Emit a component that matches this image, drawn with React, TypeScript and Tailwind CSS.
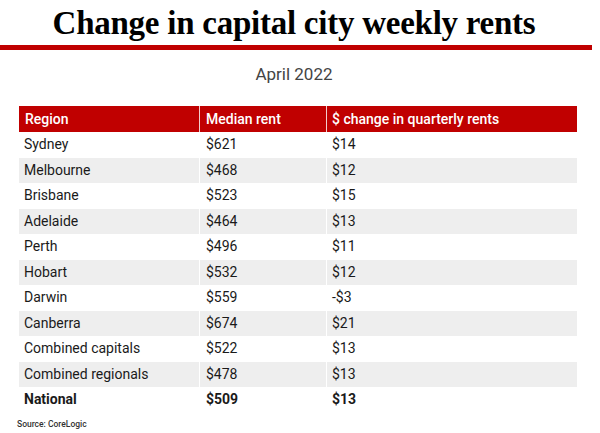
import React from 'react';

type Row = { region: string; median: string; change: string; bold?: boolean };

const rows: Row[] = [
  { region: 'Sydney', median: '$621', change: '$14' },
  { region: 'Melbourne', median: '$468', change: '$12' },
  { region: 'Brisbane', median: '$523', change: '$15' },
  { region: 'Adelaide', median: '$464', change: '$13' },
  { region: 'Perth', median: '$496', change: '$11' },
  { region: 'Hobart', median: '$532', change: '$12' },
  { region: 'Darwin', median: '$559', change: '-$3' },
  { region: 'Canberra', median: '$674', change: '$21' },
  { region: 'Combined capitals', median: '$522', change: '$13' },
  { region: 'Combined regionals', median: '$478', change: '$13' },
  { region: 'National', median: '$509', change: '$13', bold: true },
];

export default function App() {
  return (
    <div className="w-[600px] h-[433px] overflow-hidden bg-white font-['Roboto',sans-serif] text-[#1a1a1a]">
      {/* Title */}
      <h1 className="pt-[4px] pr-[12px] text-center font-['Liberation_Serif',serif] text-[33px] font-bold leading-[38px] tracking-[-0.25px] text-black">
        Change in capital city weekly rents
      </h1>
      <div className="mt-[3px] mr-[8px] h-[5px] bg-[#c00000]" />

      {/* Subtitle */}
      <div className="mt-[12px] pr-[12px] text-center text-[17px] leading-[24px] text-[#444]">April 2022</div>

      {/* Table */}
      <div className="mt-[20px] ml-[19px] w-[558px]">
        <div className="grid grid-cols-[181px_127px_250px] h-[26px] bg-[#c00000] text-[14px] font-medium text-white">
          <div className="flex items-center pl-[6px] border-r border-white/80">Region</div>
          <div className="flex items-center pl-[6px] border-r border-white/80">Median rent</div>
          <div className="flex items-center pl-[5px]">$ change in quarterly rents</div>
        </div>
        {rows.map((r, i) => (
          <div
            key={r.region}
            className={`grid grid-cols-[181px_127px_250px] h-[25.5px] text-[14px] ${i % 2 === 1 ? 'bg-[#eeeeee]' : 'bg-white'} ${r.bold ? 'font-bold' : ''}`}
          >
            <div className="flex items-center pl-[5px] border-r border-white">{r.region}</div>
            <div className="flex items-center pl-[6px] border-r border-white">{r.median}</div>
            <div className="flex items-center pl-[5px]">{r.change}</div>
          </div>
        ))}
      </div>

      <div className="mt-[5px] ml-[17px] text-[8.5px] font-medium text-[#333]">Source: CoreLogic</div>
    </div>
  );
}
